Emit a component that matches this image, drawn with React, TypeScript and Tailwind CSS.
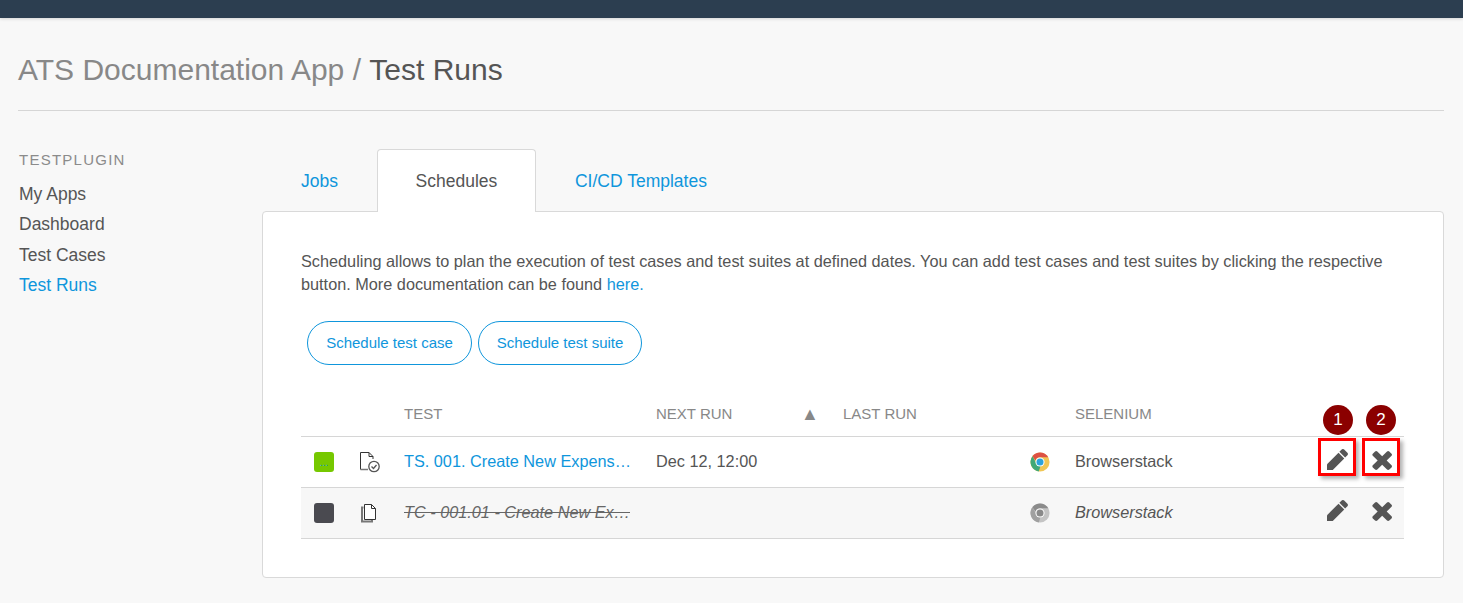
import React from 'react'

const BLUE = 'text-[#0f96dc]'

const ChromeIcon = ({ gray }: { gray?: boolean }) => (
    <svg width="20" height="20" viewBox="0 0 22 22" className="ml-[1px]">
        <circle cx="11" cy="11" r="10.5" fill={gray ? '#c4c4c4' : '#f0c654'} />
        <path d="M11 .5a10.5 10.5 0 0 1 9.1 5.3H11a5.2 5.2 0 0 0-5 3.6L2.7 4.6A10.5 10.5 0 0 1 11 .5z" fill={gray ? '#8b8b8b' : '#dd5144'} />
        <path d="M2.7 4.6l4.6 8.2a4.2 4.2 0 0 0 4.4 2.4L9.6 21.4A10.5 10.5 0 0 1 2.7 4.6z" fill={gray ? '#a0a0a0' : '#3fa878'} />
        <circle cx="11" cy="11" r="5" fill="#ffffff" />
        <circle cx="11" cy="11" r="3.9" fill={gray ? '#8a8a8a' : '#2ba3dc'} />
    </svg>
)

const DocCheckIcon = () => (
    <svg width="22" height="22" viewBox="0 0 22 22" fill="none" stroke="#333" strokeWidth="1">
        <path d="M1.5 18.5V1.5H10L14 5.5V8" />
        <path d="M10 1.5V5.5H14" />
        <path d="M1.5 18.5H9" stroke="#777" strokeWidth="1.5" />
        <circle cx="15" cy="15.5" r="5.2" stroke="#555" strokeWidth="1.3" />
        <path d="M12.5 15.5l2 2 3-3.5" stroke="#555" strokeWidth="1.3" />
    </svg>
)

const DocsIcon = () => (
    <svg width="18" height="20" viewBox="0 0 18 20" fill="none" stroke="#333" strokeWidth="1">
        <path d="M3.5 4.5H2V18.5H12V17" stroke="#777" strokeWidth="2" />
        <path d="M4.5 16.5V1.5H11.5L15.5 5.5V16.5Z" fill="#fff" />
        <path d="M11.5 1.5V5.5H15.5" />
    </svg>
)

const PencilIcon = () => (
    <svg width="21" height="21" viewBox="128 150 1520 1520" fill="#555555">
        <path d="M960 416l416 416-832 832h-416v-416z" />
        <path d="M1643 512q0 53-37 90l-166 166-416-416 166-165q36-38 90-38 53 0 91 38l235 234q37 39 37 91z" />
    </svg>
)

const CloseIcon = () => (
    <svg width="20" height="21" viewBox="282 238 1208 1316" fill="#555555" preserveAspectRatio="none">
        <path d="M1490 1322q0 40-28 68l-136 136q-28 28-68 28t-68-28l-294-294-294 294q-28 28-68 28t-68-28l-136-136q-28-28-28-68t28-68l294-294-294-294q-28-28-28-68t28-68l136-136q28-28 68-28t68 28l294 294 294-294q28-28 68-28t68 28l136 136q28 28 28 68t-28 68l-294 294 294 294q28 28 28 68z" />
    </svg>
)

const Badge = ({ n, className }: { n: number; className: string }) => (
    <span className={`absolute w-[30px] h-[30px] rounded-full bg-[#8b0000] text-white text-[17px] flex items-center justify-center ${className}`}>
        {n}
    </span>
)

const tabClass = 'flex items-center text-[17.5px]'
const markerClass = 'absolute top-[1px] w-[38px] h-[38px] border-[3px] border-[#ff0000] shadow-[3px_3px_4px_rgba(0,0,0,0.3)]'

export default function App() {
    return (
        <div className="min-h-[603px] bg-[#f8f8f8] font-['Liberation_Sans',Arial,sans-serif] text-[16.27px] text-[#555555]">
            <div className="h-[18px] bg-[#2c3e50] shadow-[0_1px_3px_rgba(0,0,0,0.15)]" />
            <div className="pl-[18px] pr-[19px]">
                <h1 className="h-[93px] pt-[10px] flex items-center text-[30px] text-[#888888] border-b border-[#d6d6d6] mb-[38px]">
                    ATS Documentation App /&nbsp;<span className="text-[#555555]">Test Runs</span>
                </h1>
                <div className="flex">
                    <aside className="w-[244px] shrink-0 pt-[1px] pl-[1px]">
                        <div className="text-[15px] tracking-[1.25px] text-[#8b8b8b] h-[20px] leading-[20px] mb-[9px]">TESTPLUGIN</div>
                        <ul className="text-[17.5px] leading-[30.3px]">
                            <li>My Apps</li>
                            <li>Dashboard</li>
                            <li>Test Cases</li>
                            <li className={BLUE}>Test Runs</li>
                        </ul>
                    </aside>
                    <main className="flex-1 min-w-0">
                        <div className="flex pl-[39px] relative z-10 h-[62px]">
                            <a className={`${tabClass} ${BLUE} mr-[39px] h-[62px] pt-[2px]`}>Jobs</a>
                            <a className={`${tabClass} w-[159px] justify-center bg-white border border-b-0 border-[#d9d9d9] rounded-t-[4px] h-[63px]`}>Schedules</a>
                            <a className={`${tabClass} ${BLUE} ml-[39px] h-[62px] pt-[2px]`}>CI/CD Templates</a>
                        </div>
                        <div className="bg-white border border-[#d9d9d9] rounded-[4px] h-[367px] pl-[38px] pr-[39px] pt-[38px]">
                            <p className="leading-[23px]">
                                Scheduling allows to plan the execution of test cases and test suites at defined dates. You can add test cases and test suites by clicking the respective button. More documentation can be found <a className={BLUE}>here.</a>
                            </p>
                            <div className="flex gap-[6px] ml-[6px] mt-[25px]">
                                <button className={`h-[44px] w-[165px] rounded-full border border-[#0f96dc] text-[15px] ${BLUE}`}>Schedule test case</button>
                                <button className={`h-[44px] w-[164px] rounded-full border border-[#0f96dc] text-[15px] ${BLUE}`}>Schedule test suite</button>
                            </div>
                            <div className="mt-[27px] text-[#888888] text-[15px] flex items-center h-[45px] border-b border-[#d6d6d6]">
                                <span className="w-[103px]" />
                                <span className="w-[252px]">TEST</span>
                                <span className="w-[147px]">NEXT RUN</span>
                                <span className="w-[40px] text-[18px] leading-none ml-[-2px] mr-[2px]">▲</span>
                                <span className="w-[232px]">LAST RUN</span>
                                <span>SELENIUM</span>
                            </div>
                            <div className="flex items-center h-[51px] border-b border-[#d6d6d6] relative">
                                <span className="w-[20px] h-[20px] ml-[13px] rounded-[3px] bg-[#76c800] shrink-0 flex items-center justify-center text-[10px] text-[#0f96dc]">...</span>
                                <span className="w-[70px] pl-[25px] shrink-0 flex"><DocCheckIcon /></span>
                                <a className={`w-[252px] shrink-0 mb-[2px] ${BLUE}`}>TS. 001. Create New Expens…</a>
                                <span className="w-[373px] shrink-0 mb-[2px]">Dec 12, 12:00</span>
                                <span className="w-[46px] shrink-0 flex"><ChromeIcon /></span>
                                <span className="w-[240px] shrink-0 mb-[2px]">Browserstack</span>
                                <span className="w-[44px] shrink-0 flex justify-center mb-[6px]"><PencilIcon /></span>
                                <span className="w-[45px] shrink-0 flex justify-center mb-[6px]"><CloseIcon /></span>
                                <span className={`${markerClass} left-[1017px]`} />
                                <span className={`${markerClass} left-[1061px]`} />
                                <Badge n={1} className="left-[1022px] top-[-32px]" />
                                <Badge n={2} className="left-[1065px] top-[-32px]" />
                            </div>
                            <div className="flex items-center h-[51px] border-b border-[#d6d6d6] bg-[#f7f7f7]">
                                <span className="w-[20px] h-[20px] ml-[13px] rounded-[3px] bg-[#4a4a50] shrink-0" />
                                <span className="w-[70px] pl-[26px] shrink-0 flex"><DocsIcon /></span>
                                <span className="w-[252px] shrink-0 mb-[2px] italic line-through text-[#666666]">TC - 001.01 - Create New Ex…</span>
                                <span className="w-[373px] shrink-0" />
                                <span className="w-[46px] shrink-0 flex"><ChromeIcon gray /></span>
                                <span className="w-[240px] shrink-0 mb-[2px] italic">Browserstack</span>
                                <span className="w-[44px] shrink-0 flex justify-center mb-[6px]"><PencilIcon /></span>
                                <span className="w-[45px] shrink-0 flex justify-center mb-[6px]"><CloseIcon /></span>
                            </div>
                        </div>
                    </main>
                </div>
            </div>
        </div>
    )
}
